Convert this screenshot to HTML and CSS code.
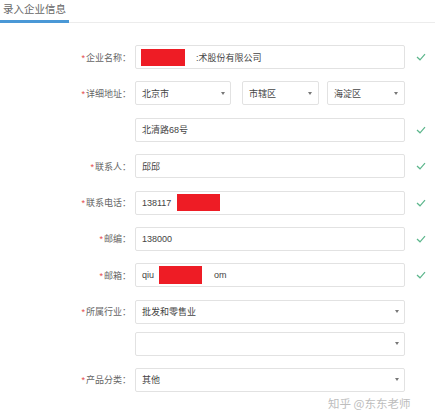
FILE: index.html
```html
<!DOCTYPE html>
<html lang="zh">
<head>
<meta charset="utf-8">
<title>录入企业信息</title>
<link rel="stylesheet" href="styles.css">
</head>
<body>
<div class="page">
  <div class="tabs"><div class="tab">录入企业信息</div></div>
  <form class="form">
    <div class="row">
      <label class="label"><span class="req">*</span>企业名称：</label>
      <div class="field"><span class="mask mask-name"></span><span class="after-name">:术股份有限公司</span></div>
      <span class="ok"><svg viewBox="0 0 10 8" width="10" height="8"><polyline points="1,4 4,6.8 9,1.2"/></svg></span>
    </div>
    <div class="row">
      <label class="label"><span class="req">*</span>详细地址：</label>
      <div class="selects">
        <div class="field select s1"><span>北京市</span><i class="arrow"></i></div>
        <div class="field select s2"><span>市辖区</span><i class="arrow"></i></div>
        <div class="field select s3"><span>海淀区</span><i class="arrow"></i></div>
      </div>
      <span class="ok"></span>
    </div>
    <div class="row">
      <label class="label"></label>
      <div class="field"><span>北清路68号</span></div>
      <span class="ok"><svg viewBox="0 0 10 8" width="10" height="8"><polyline points="1,4 4,6.8 9,1.2"/></svg></span>
    </div>
    <div class="row">
      <label class="label"><span class="req">*</span>联系人：</label>
      <div class="field"><span>邱邱</span></div>
      <span class="ok"><svg viewBox="0 0 10 8" width="10" height="8"><polyline points="1,4 4,6.8 9,1.2"/></svg></span>
    </div>
    <div class="row">
      <label class="label"><span class="req">*</span>联系电话：</label>
      <div class="field"><span>138117</span><span class="mask mask-phone"></span></div>
      <span class="ok"><svg viewBox="0 0 10 8" width="10" height="8"><polyline points="1,4 4,6.8 9,1.2"/></svg></span>
    </div>
    <div class="row">
      <label class="label"><span class="req">*</span>邮编：</label>
      <div class="field"><span>138000</span></div>
      <span class="ok"><svg viewBox="0 0 10 8" width="10" height="8"><polyline points="1,4 4,6.8 9,1.2"/></svg></span>
    </div>
    <div class="row">
      <label class="label"><span class="req">*</span>邮箱：</label>
      <div class="field"><span>qiu</span><span class="mask mask-mail"></span><span class="after-mail">om</span></div>
      <span class="ok"><svg viewBox="0 0 10 8" width="10" height="8"><polyline points="1,4 4,6.8 9,1.2"/></svg></span>
    </div>
    <div class="row">
      <label class="label"><span class="req">*</span>所属行业：</label>
      <div class="field select"><span>批发和零售业</span><i class="arrow"></i></div>
      <span class="ok"></span>
    </div>
    <div class="row row-tight">
      <label class="label"></label>
      <div class="field select"><span></span><i class="arrow"></i></div>
      <span class="ok"></span>
    </div>
    <div class="row">
      <label class="label"><span class="req">*</span>产品分类：</label>
      <div class="field select"><span>其他</span><i class="arrow"></i></div>
      <span class="ok"></span>
    </div>
  </form>
  <div class="watermark">知乎 @东东老师</div>
</div>
</body>
</html>
```

FILE: styles.css
```css
html, body {
  margin: 0;
  padding: 0;
  background: #ffffff;
}

body {
  font-family: "Liberation Sans", "Noto Sans CJK SC", sans-serif;
  color: #333;
  width: 435px;
  height: 416px;
  overflow: hidden;
}

.page {
  position: relative;
  width: 435px;
  height: 416px;
}

.tabs {
  display: flex;
  border-bottom: 1px solid #ececec;
  height: 22px;
}

.tab {
  box-sizing: border-box;
  height: 23px;
  padding: 2px 3px 0 3px;
  width: 69px;
  font-size: 10.5px;
  line-height: 14px;
  color: #666;
  border-bottom: 3px solid #4a98d6;
  white-space: nowrap;
}

.form {
  display: flex;
  flex-direction: column;
  gap: 12.4px;
  margin-top: 22px;
}

.row {
  display: flex;
  align-items: center;
  height: 24px;
}

.row-tight {
  margin-top: -4.4px;
  margin-bottom: -0.4px;
}

.label {
  width: 131px;
  flex: none;
  text-align: right;
  font-size: 9px;
  color: #666;
  white-space: nowrap;
  margin-right: 4px;
}

.req {
  color: #e4474a;
  margin-right: 1px;
}

.field {
  box-sizing: border-box;
  width: 270px;
  height: 24px;
  flex: none;
  display: flex;
  align-items: center;
  border: 1px solid #e2e2e2;
  border-radius: 2px;
  padding: 0 5px 0 6px;
  font-size: 9px;
  color: #444;
  white-space: nowrap;
  background: #fff;
}

.selects {
  display: flex;
  width: 270px;
  flex: none;
}

.select {
  justify-content: space-between;
}

.s1 {
  width: 96px;
}

.s2 {
  width: 77px;
  margin-left: 11px;
  padding-right: 6px;
}

.s3 {
  width: 78px;
  margin-left: 8px;
  padding-right: 6px;
}

.arrow {
  display: block;
  width: 0;
  height: 0;
  border-left: 2px solid transparent;
  border-right: 2px solid transparent;
  border-top: 3px solid #777;
}

.ok {
  width: 30px;
  display: flex;
  justify-content: center;
  padding-left: 1px;
}

.ok svg {
  display: block;
  fill: none;
  stroke: #5cb68c;
  stroke-width: 1.2;
}

.mask {
  display: inline-block;
  background: #ee1c25;
}

.mask-name {
  width: 44px;
  height: 17px;
  margin-left: -1px;
}

.after-name {
  margin-left: 11px;
}

.mask-phone {
  width: 43px;
  height: 17px;
  margin-left: 6px;
}

.mask-mail {
  width: 43px;
  height: 18px;
  margin-left: 5px;
}

.after-mail {
  margin-left: 12px;
}

.watermark {
  position: absolute;
  left: 328px;
  top: 396px;
  font-size: 11.5px;
  line-height: 14px;
  color: #bdbdbd;
  white-space: nowrap;
  font-family: "Noto Sans CJK SC", sans-serif;
}
```
